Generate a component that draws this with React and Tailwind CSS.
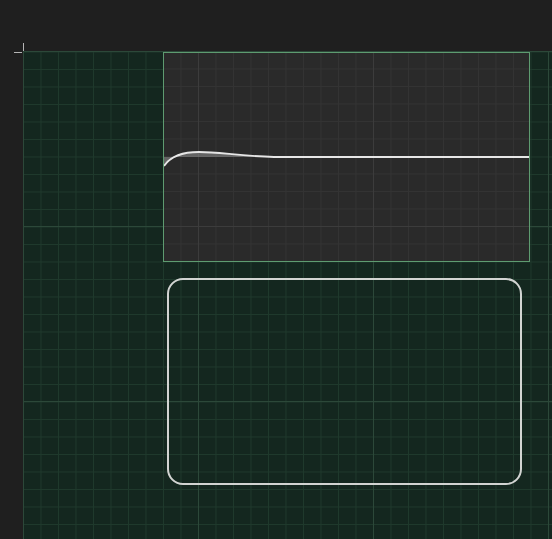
import React from 'react';

const Wave = () => (
  <svg className="absolute inset-0" width="365" height="208" viewBox="0 0 365 208">
    <path
      d="M0 113 C 6 104, 16 99, 35 99 C 55 99, 75 103, 110 104 L 365 104 L 0 104 Z"
      fill="#8a8a8a"
      fillOpacity="0.6"
    />
    <path
      d="M0 113 C 6 104, 16 99, 35 99 C 55 99, 75 103, 110 104 L 365 104"
      fill="none"
      stroke="#e6e6e6"
      strokeWidth="1.8"
    />
  </svg>
);

const App = () => {
  return (
    <div className="relative w-[552px] h-[539px] bg-[#1f1f1f] flex flex-col overflow-hidden font-['Liberation_Sans',sans-serif]">
      {/* corner marker */}
      <div className="absolute left-[23px] top-[43px] w-px h-[8px] bg-[#b5b5b5]" />
      <div className="absolute left-[14px] top-[52px] w-[8px] h-px bg-[#b5b5b5]" />

      <div className="h-[51px] shrink-0" />
      <div className="flex flex-1">
        <div className="w-[23px] shrink-0" />
        <div className="flex-1 bg-[#14271f] [background-image:linear-gradient(to_right,#2c4839_1px,transparent_1px),linear-gradient(to_bottom,#2c4839_1px,transparent_1px),linear-gradient(to_right,#1f392c_1px,transparent_1px),linear-gradient(to_bottom,#1f392c_1px,transparent_1px)] [background-size:175px_175px,175px_175px,17.5px_17.5px,17.5px_17.5px] [background-position:0_0,0_0,0_0.5px,0_0.5px]">
          <div className="flex flex-col pl-[140px] pt-px">
            {/* plot panel */}
            <div className="relative w-[367px] h-[210px] border border-[#5e9b70] bg-[#2a2a2a] [background-image:linear-gradient(to_right,#3c3c3c_1px,transparent_1px),linear-gradient(to_bottom,#3c3c3c_1px,transparent_1px),linear-gradient(to_right,#333333_1px,transparent_1px),linear-gradient(to_bottom,#333333_1px,transparent_1px)] [background-size:175px_175px,175px_175px,17.5px_17.5px,17.5px_17.5px] [background-position:34px_173px,34px_173px,16.5px_15.5px,16.5px_15.5px]">
              <Wave />
            </div>
            {/* empty rounded frame */}
            <div className="mt-[16px] ml-[4px] w-[355px] h-[207px] rounded-[16px] border-2 border-[#d2d4d2]" />
          </div>
        </div>
      </div>
    </div>
  );
};

export default App;
